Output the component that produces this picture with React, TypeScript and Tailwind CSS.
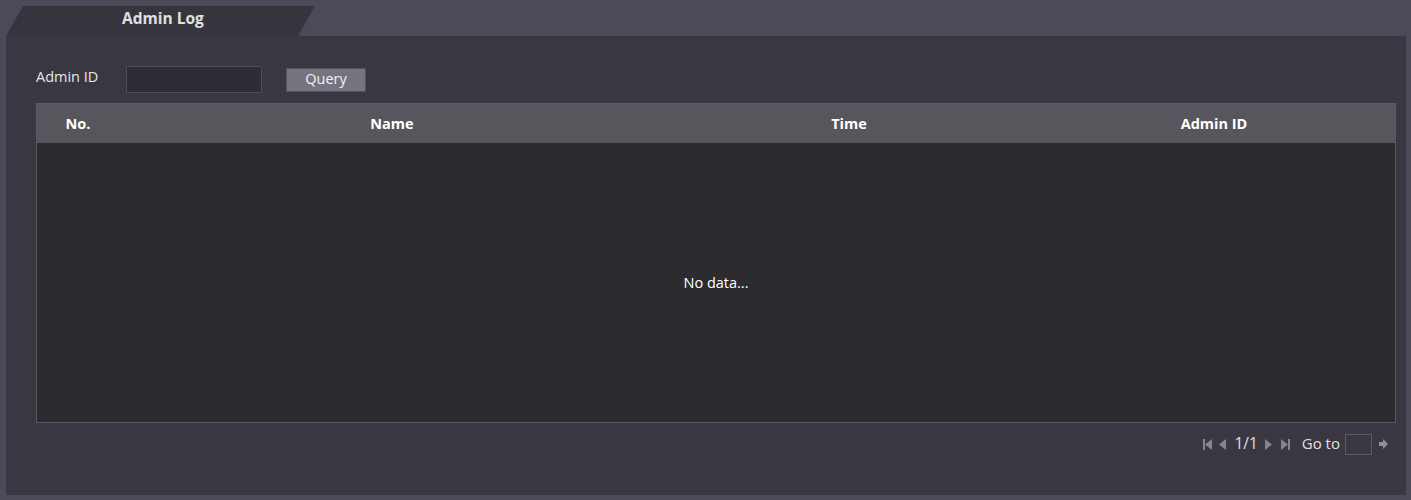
import React from "react";

const font = { fontFamily: '"Open Sans", "Noto Sans", Arial, sans-serif' };

function Tri({ dir }: { dir: "l" | "r" }) {
  return (
    <svg width="7" height="11" viewBox="0 0 7 11">
      {dir === "l" ? <polygon points="7,0 7,11 0,5.5" fill="#858491" /> : <polygon points="0,0 0,11 7,5.5" fill="#858491" />}
    </svg>
  );
}

function Edge({ dir }: { dir: "l" | "r" }) {
  return (
    <svg width="9" height="11" viewBox="0 0 9 11">
      {dir === "l" ? (
        <>
          <rect x="0" y="0" width="2" height="11" fill="#858491" />
          <polygon points="9,0 9,11 2,5.5" fill="#858491" />
        </>
      ) : (
        <>
          <polygon points="0,0 0,11 7,5.5" fill="#858491" />
          <rect x="7" y="0" width="2" height="11" fill="#858491" />
        </>
      )}
    </svg>
  );
}

export default function App() {
  return (
    <div className="w-[1411px] h-[500px] bg-[#4c4a58] pt-[6px] pl-[6px] pr-[5px] text-[#e6e6e8]" style={font}>
      <div className="h-[30px] w-[309px] bg-[#36353d] [clip-path:polygon(17px_0,309px_0,292px_100%,0_100%)] pl-[116px] pb-[4px] flex items-center">
        <span className="text-[15.5px] font-bold text-[#e0e0e2] leading-none">Admin Log</span>
      </div>
      <div className="h-[459px] bg-[#393842] pl-[30px] pr-[10px] pt-[30px] flex flex-col">
        <div className="flex items-center h-[27px]">
          <span className="w-[90px] mb-[5px] text-[14.5px] text-[#e6e6e8]">Admin ID</span>
          <input className="w-[136px] h-[27px] bg-[#2e2d34] border border-[#4f4e58] outline-none" />
          <button className="ml-[24px] w-[80px] h-[24px] bg-[#75747f] border border-[#55545e] text-[14.5px] text-[#f2f2f4] leading-none pb-[1px]">
            Query
          </button>
        </div>
        <div className="mt-[10px] w-[1360px] border border-[#5c5b62] bg-[#2c2b30]">
          <div className="h-[39px] bg-[#57565c] flex items-center text-[14.5px] font-bold text-white">
            <div className="w-[82px] text-center">No.</div>
            <div className="w-[546px] text-center">Name</div>
            <div className="w-[368px] text-center">Time</div>
            <div className="flex-1 text-center">Admin ID</div>
          </div>
          <div className="h-[279px] flex items-center justify-center text-[14.5px] text-white">No data...</div>
        </div>
        <div className="mt-[10px] w-[1360px] flex items-center justify-end h-[22px] pr-[8px]">
          <Edge dir="l" />
          <span className="ml-[7px]"><Tri dir="l" /></span>
          <span className="ml-[8px] mb-[1px] text-[15.5px] text-[#e0e0e4]">1/1</span>
          <span className="ml-[7px]"><Tri dir="r" /></span>
          <span className="ml-[9px]"><Edge dir="r" /></span>
          <span className="ml-[12px] mb-[2px] text-[15px] text-[#e0e0e4]">Go to</span>
          <input className="ml-[5px] w-[27px] h-[21px] bg-[#393842] border border-[#5a5964] outline-none" />
          <svg className="ml-[7px]" width="9" height="10" viewBox="0 0 9 10">
            <polygon points="0,3 4,3 4,0 9,5 4,10 4,7 0,7" fill="#8e8d9a" />
          </svg>
        </div>
      </div>
    </div>
  );
}
